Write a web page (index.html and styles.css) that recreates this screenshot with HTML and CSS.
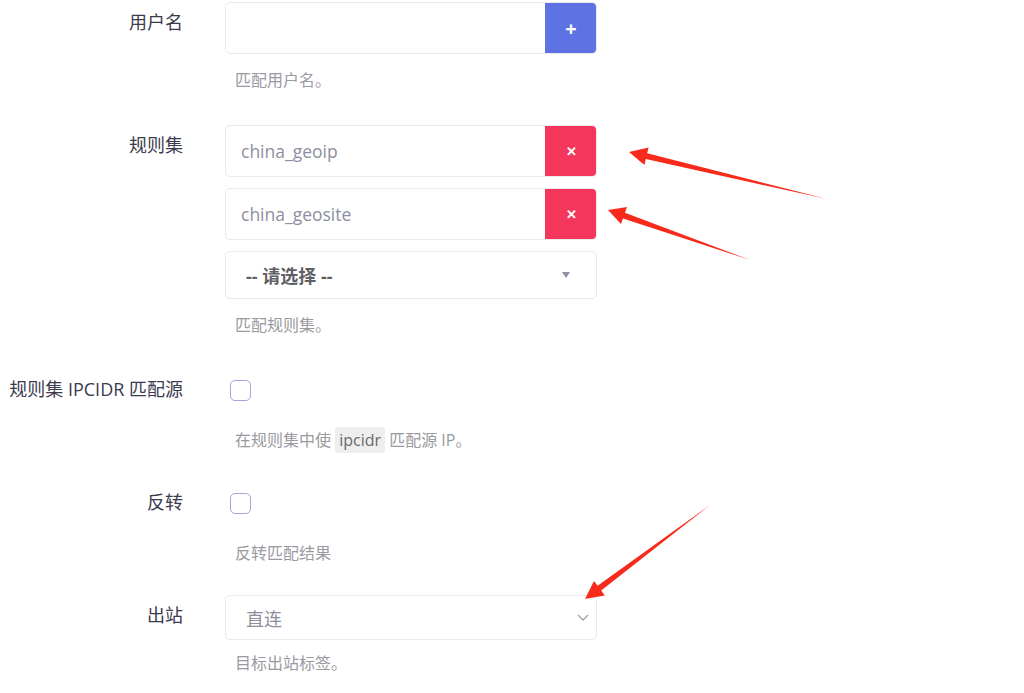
FILE: index.html
```html
<!DOCTYPE html>
<html lang="zh-CN">
<head>
<meta charset="utf-8">
<title>规则</title>
<link rel="stylesheet" href="styles.css">
</head>
<body>
<div class="form">
  <div class="row">
    <div class="lbl">用户名</div>
    <div class="ctl">
      <div class="group">
        <div class="field"></div>
        <div class="btn add">+</div>
      </div>
      <div class="help">匹配用户名。</div>
    </div>
  </div>

  <div class="row r2">
    <div class="lbl">规则集</div>
    <div class="ctl">
      <div class="group">
        <div class="field">china_geoip</div>
        <div class="btn del">&#x2715;</div>
      </div>
      <div class="group gap">
        <div class="field">china_geosite</div>
        <div class="btn del">&#x2715;</div>
      </div>
      <div class="select gap">
        <span class="sel-text">-- 请选择 --</span>
        <span class="tri"></span>
      </div>
      <div class="help">匹配规则集。</div>
    </div>
  </div>

  <div class="row r3">
    <div class="lbl">规则集 IPCIDR 匹配源</div>
    <div class="ctl">
      <div class="check-wrap"><span class="check"></span></div>
      <div class="help">在规则集中使 <code>ipcidr</code> 匹配源 IP。</div>
    </div>
  </div>

  <div class="row r4">
    <div class="lbl">反转</div>
    <div class="ctl">
      <div class="check-wrap"><span class="check"></span></div>
      <div class="help">反转匹配结果</div>
    </div>
  </div>

  <div class="row r5">
    <div class="lbl">出站</div>
    <div class="ctl">
      <div class="select out">
        <span class="out-text">直连</span>
        <svg class="chev" width="12" height="7" viewBox="0 0 12 7"><polyline points="1,1 6,6 11,1" fill="none" stroke="#9aa0ac" stroke-width="1.3"/></svg>
      </div>
      <div class="help h5">目标出站标签。</div>
    </div>
  </div>
</div>

<svg class="arrows" width="1024" height="693" viewBox="0 0 1024 693">
  <polygon fill="#f82a1c" points="629,152 648.6,147.4 647.2,153.3 827,199 645.8,159.1 644.4,164.9"/>
  <polygon fill="#f82a1c" points="608,210 627,207.1 625,212.8 750,260 623,218.4 621,224.1"/>
  <polygon fill="#f82a1c" points="585,599 594,581 597.6,585.8 710,505 601.2,590.6 604.8,595.4"/>
</svg>
</body>
</html>
```
FILE: styles.css
```css
html, body {
  margin: 0;
  padding: 0;
  background: #ffffff;
}
body {
  font-family: "Open Sans", "Noto Sans CJK SC", sans-serif;
  width: 1024px;
  height: 693px;
  overflow: hidden;
  position: relative;
}
.form {
  padding-top: 2px;
  display: flex;
  flex-direction: column;
}
.row {
  display: flex;
  align-items: flex-start;
}
.lbl {
  width: 183px;
  padding-right: 42px;
  box-sizing: content-box;
  text-align: right;
  font-size: 18px;
  line-height: 26px;
  padding-top: 7px;
  color: #3b3a4e;
  white-space: nowrap;
}
.ctl {
  width: 372px;
  display: flex;
  flex-direction: column;
}
.group {
  display: flex;
  height: 52px;
  border: 1px solid #e6e9ee;
  border-radius: 5px;
  box-sizing: border-box;
  overflow: hidden;
}
.gap { margin-top: 11px; }
.field {
  flex: 1;
  padding-left: 15px;
  display: flex;
  align-items: center;
  font-size: 17.5px;
  color: #8c8f9f;
}
.btn {
  width: 52px;
  margin: -1px -1px -1px 0;
  display: flex;
  align-items: center;
  justify-content: center;
  color: #ffffff;
  font-weight: 700;
}
.add {
  background: #5e72e4;
  font-size: 20px;
}
.del {
  background: #f5365c;
  font-size: 13px;
}
.select {
  height: 48px;
  border: 1px solid #e6e9ee;
  border-radius: 5px;
  box-sizing: border-box;
  display: flex;
  align-items: center;
  justify-content: space-between;
  padding: 0 26px 0 20px;
}
.sel-text {
  font-size: 18px;
  font-weight: 700;
  color: #5f5f66;
}
.tri {
  width: 0;
  height: 0;
  border-left: 4px solid transparent;
  border-right: 4px solid transparent;
  border-top: 6px solid #8d93a3;
}
.help {
  margin-top: 14px;
  padding-left: 10px;
  font-size: 16px;
  line-height: 24px;
  color: #9a9a9f;
}
code {
  font-family: "Open Sans", "Noto Sans CJK SC", sans-serif;
  font-size: 16px;
  background: #eeeeee;
  color: #6a6a70;
  padding: 2px 4px;
  border-radius: 2px;
}
.check-wrap {
  height: 45px;
  padding-top: 11px;
  box-sizing: border-box;
}
.check {
  display: block;
  width: 21px;
  height: 21px;
  margin-left: 5px;
  border: 1.5px solid #a7a3dd;
  border-radius: 5px;
  box-sizing: border-box;
}
.r2 { margin-top: 33px; }
.r3 { margin-top: 32px; }
.r4 { margin-top: 30px; }
.r5 { margin-top: 30px; }
.out {
  height: 45px;
  padding: 0 7px 0 20px;
}
.out-text {
  font-size: 18px;
  color: #8c8f9a;
}
.h5 { margin-top: 11px; }
.arrows {
  position: absolute;
  left: 0;
  top: 0;
  pointer-events: none;
}
```
